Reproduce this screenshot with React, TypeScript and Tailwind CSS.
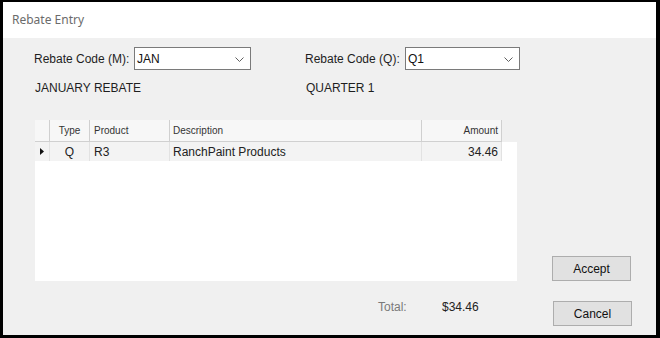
import React from "react";

const font = { fontFamily: '"Liberation Sans", Arial, sans-serif' };

function Combo({ value, className }: { value: string; className?: string }) {
  return (
    <div
      className={`flex h-[23px] items-center justify-between border border-[#7a7a7a] bg-white pl-[2px] pr-[6px] text-[12px] text-[#111] ${className ?? ""}`}
    >
      <span>{value}</span>
      <svg width="9" height="6" viewBox="0 0 9 6" className="mt-[2px]">
        <polyline points="0.5,0.5 4.5,4.5 8.5,0.5" fill="none" stroke="#606060" strokeWidth="1" />
      </svg>
    </div>
  );
}

interface Row {
  type: string;
  product: string;
  description: string;
  amount: string;
}

const rows: Row[] = [{ type: "Q", product: "R3", description: "RanchPaint Products", amount: "34.46" }];

export default function App() {
  return (
    <div
      className="flex h-[338px] w-[660px] flex-col border-t-2 border-r-[4px] border-b-[3px] border-l-[3px] border-black bg-[#f0f0f0]"
      style={font}
    >
      {/* title bar */}
      <div
        className="flex h-[36px] items-center bg-white pl-[9px] text-[12px] text-[#6b6b6b]"
        style={{ fontFamily: '"Noto Sans", "Open Sans", sans-serif' }}
      >
        Rebate Entry
      </div>

      <div className="flex flex-1 flex-col pl-[31px] pt-[9px] text-[12px] text-[#1e1e1e]">
        {/* rebate codes */}
        <div className="flex items-center">
          <div className="flex w-[271px] items-center">
            <span className="w-[100px]">Rebate Code (M):</span>
            <Combo value="JAN" className="w-[117px]" />
          </div>
          <div className="flex items-center">
            <span className="w-[100px]">Rebate Code (Q):</span>
            <Combo value="Q1" className="w-[115px]" />
          </div>
        </div>

        <div className="mt-[9px] flex">
          <span className="w-[271px] pl-[1px]">JANUARY REBATE</span>
          <span className="pl-[1px]">QUARTER 1</span>
        </div>

        {/* grid + accept */}
        <div className="mt-[23px] flex items-end">
          <div className="flex h-[161px] w-[483px] flex-col pl-[1px]">
            <div className="flex h-[22px] text-[10px] text-[#333]">
              <div className="flex w-[502px]">
                <div className="w-[15px] border-r border-b border-[#d0d0d0] bg-[#f7f7f7]" />
                <div className="flex w-[40px] items-center justify-center border-r border-b border-[#d0d0d0] bg-[#f7f7f7]">Type</div>
                <div className="flex w-[80px] items-center border-r border-b border-[#d0d0d0] bg-[#f7f7f7] pl-[4px]">Product</div>
                <div className="flex w-[252px] items-center border-r border-b border-[#d0d0d0] bg-[#f7f7f7] pl-[3px]">Description</div>
                <div className="flex w-[80px] items-center justify-end border-r border-b border-[#d0d0d0] bg-[#f7f7f7] pr-[3px]">Amount</div>
              </div>
            </div>
            <div className="flex-1 bg-white">
              {rows.map((r) => (
                <div key={r.product} className="flex h-[19px] w-[467px] items-center bg-[#f3f3f3] text-[12px] text-[#222]">
                  <div className="flex h-full w-[15px] items-center justify-center border-r border-[#e2e2e2]">
                    <svg width="4" height="7" viewBox="0 0 4 7">
                      <polygon points="0,0 4,3.5 0,7" fill="#111" />
                    </svg>
                  </div>
                  <div className="flex h-full w-[40px] items-center justify-center border-r border-[#e2e2e2]">{r.type}</div>
                  <div className="flex h-full w-[80px] items-center border-r border-[#e2e2e2] pl-[4px]">{r.product}</div>
                  <div className="flex h-full w-[252px] items-center border-r border-[#e2e2e2] pl-[3px]">{r.description}</div>
                  <div className="flex h-full w-[80px] items-center justify-end border-r border-[#e2e2e2] pr-[3px]">{r.amount}</div>
                </div>
              ))}
            </div>
          </div>
          <button className="ml-[35px] h-[25px] w-[79px] border border-[#adadad] bg-[#e1e1e1] text-[12px] text-[#111]">
            Accept
          </button>
        </div>

        {/* total + cancel */}
        <div className="mt-[17px] flex items-start">
          <span className="ml-[344px] w-[64px] text-[#7a7a7a]">Total:</span>
          <span className="w-[111px] text-[#222]">$34.46</span>
          <button className="mt-[3px] h-[25px] w-[79px] border border-[#adadad] bg-[#e1e1e1] text-[12px] text-[#111]">
            Cancel
          </button>
        </div>
      </div>
    </div>
  );
}
